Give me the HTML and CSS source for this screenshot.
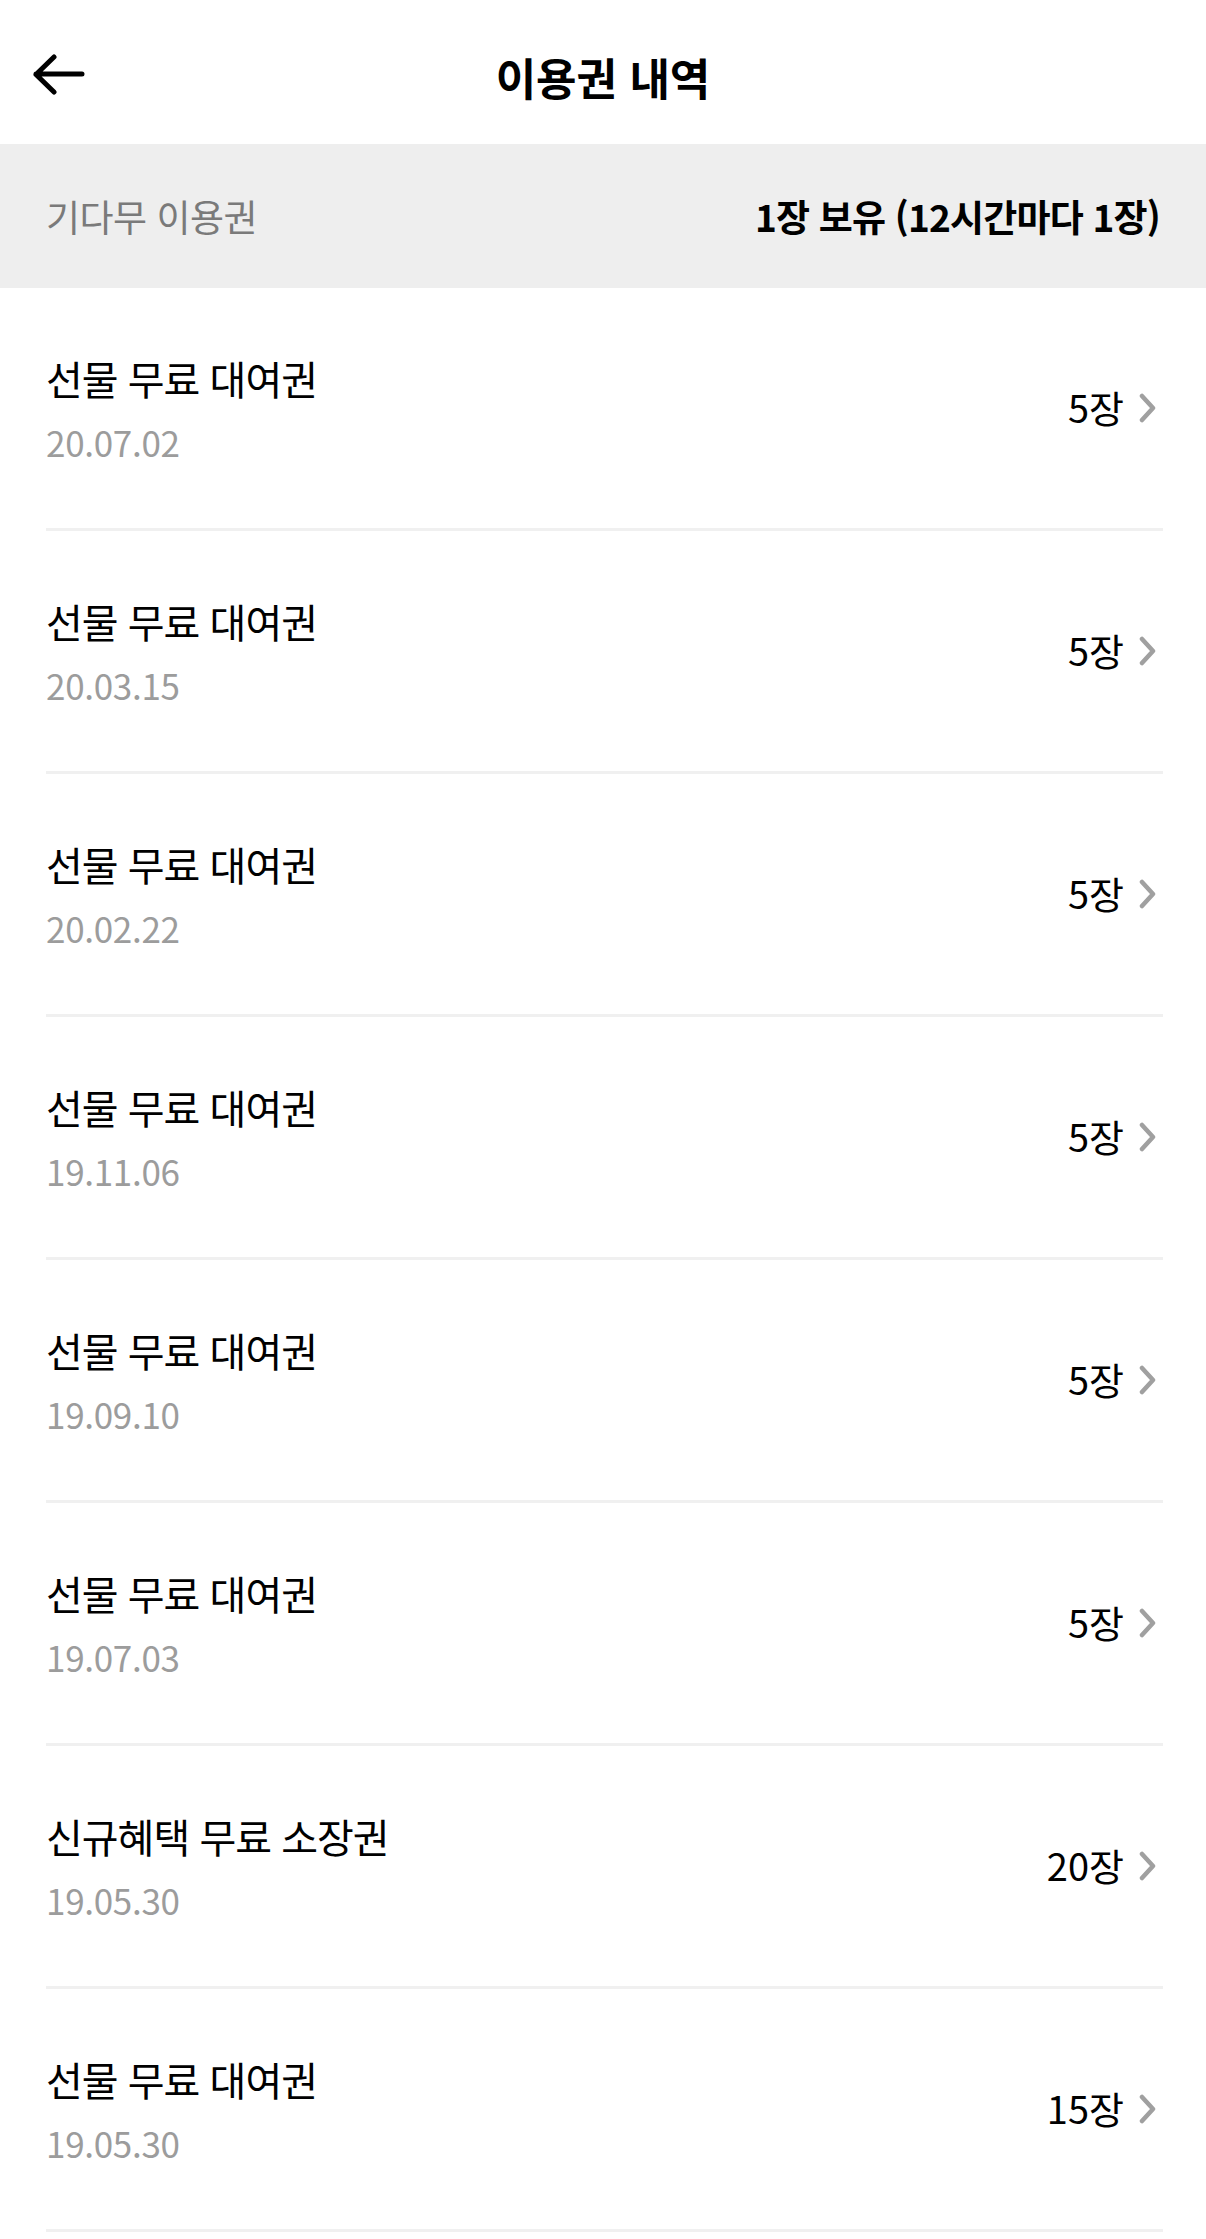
FILE: index.html
```html
<!DOCTYPE html>
<html lang="ko">
<head>
  <meta charset="UTF-8" />
  <meta name="viewport" content="width=device-width, initial-scale=1" />
  <title>이용권 내역</title>
  <link rel="stylesheet" href="styles.css">
</head>
<body>
  <header class="topbar">
    <button class="back-btn" aria-label="뒤로">
      <svg width="56" height="42" viewBox="0 0 56 42">
        <path d="M52 20H6M24 3L6 20.5 24 38" fill="none" stroke="#000" stroke-width="5" stroke-linecap="round" stroke-linejoin="round"/>
      </svg>
    </button>
    <h1 class="title">이용권 내역</h1>
  </header>

  <div class="summary">
    <span class="summary-label">기다무 이용권</span>
    <span class="summary-value">1장 보유 (12시간마다 1장)</span>
  </div>

  <ul class="ticket-list">
    <li class="ticket">
      <div class="ticket-info">
        <div class="ticket-name">선물 무료 대여권</div>
        <div class="ticket-date">20.07.02</div>
      </div>
      <div class="ticket-count">5장 <svg class="chevron" width="18" height="30" viewBox="0 0 18 30"><path d="M3 3l11 12-11 12" /></svg></div>
    </li>
    <li class="ticket">
      <div class="ticket-info">
        <div class="ticket-name">선물 무료 대여권</div>
        <div class="ticket-date">20.03.15</div>
      </div>
      <div class="ticket-count">5장 <svg class="chevron" width="18" height="30" viewBox="0 0 18 30"><path d="M3 3l11 12-11 12" /></svg></div>
    </li>
    <li class="ticket">
      <div class="ticket-info">
        <div class="ticket-name">선물 무료 대여권</div>
        <div class="ticket-date">20.02.22</div>
      </div>
      <div class="ticket-count">5장 <svg class="chevron" width="18" height="30" viewBox="0 0 18 30"><path d="M3 3l11 12-11 12" /></svg></div>
    </li>
    <li class="ticket">
      <div class="ticket-info">
        <div class="ticket-name">선물 무료 대여권</div>
        <div class="ticket-date">19.11.06</div>
      </div>
      <div class="ticket-count">5장 <svg class="chevron" width="18" height="30" viewBox="0 0 18 30"><path d="M3 3l11 12-11 12" /></svg></div>
    </li>
    <li class="ticket">
      <div class="ticket-info">
        <div class="ticket-name">선물 무료 대여권</div>
        <div class="ticket-date">19.09.10</div>
      </div>
      <div class="ticket-count">5장 <svg class="chevron" width="18" height="30" viewBox="0 0 18 30"><path d="M3 3l11 12-11 12" /></svg></div>
    </li>
    <li class="ticket">
      <div class="ticket-info">
        <div class="ticket-name">선물 무료 대여권</div>
        <div class="ticket-date">19.07.03</div>
      </div>
      <div class="ticket-count">5장 <svg class="chevron" width="18" height="30" viewBox="0 0 18 30"><path d="M3 3l11 12-11 12" /></svg></div>
    </li>
    <li class="ticket">
      <div class="ticket-info">
        <div class="ticket-name">신규혜택 무료 소장권</div>
        <div class="ticket-date">19.05.30</div>
      </div>
      <div class="ticket-count">20장 <svg class="chevron" width="18" height="30" viewBox="0 0 18 30"><path d="M3 3l11 12-11 12" /></svg></div>
    </li>
    <li class="ticket">
      <div class="ticket-info">
        <div class="ticket-name">선물 무료 대여권</div>
        <div class="ticket-date">19.05.30</div>
      </div>
      <div class="ticket-count">15장 <svg class="chevron" width="18" height="30" viewBox="0 0 18 30"><path d="M3 3l11 12-11 12" /></svg></div>
    </li>
  </ul>
</body>
</html>
```

FILE: styles.css
```css
body {
  font-family: "Noto Sans CJK KR", "Noto Sans", sans-serif;
  background: #fff;
  color: #000;
  margin: 0; padding: 0;
}
.topbar {
  height: 144px;
  display: flex;
  align-items: center;
  justify-content: center;
  position: relative;
}
.back-btn {
  position: absolute;
  left: 30px;
  top: 54px;
  background: none;
  border: none;
  padding: 0;
  cursor: pointer;
}
.back-btn svg {
  display: block;
}
.title {
  margin: 0;
  font-size: 44px;
  font-weight: bold;
  letter-spacing: 0;
  transform: translateY(5px);
}
.summary {
  height: 144px;
  background: #eeeeee;
  display: flex;
  align-items: center;
  justify-content: space-between;
  padding: 0 46px;
}
.summary-label {
  font-size: 37px;
  color: #7a7a7a;
  letter-spacing: -0.5px;
}
.summary-value {
  font-size: 37px;
  font-weight: bold;
  letter-spacing: -0.8px;
}
.ticket-list {
  list-style: none;
  margin: 0;
  padding: 0 43px 0 46px;
}
.ticket {
  height: 243px;
  box-sizing: border-box;
  border-bottom: 3px solid #f0f0f0;
  display: flex;
  align-items: center;
  justify-content: space-between;
}
.ticket-info {
  display: flex;
  flex-direction: column;
  gap: 11px;
}
.ticket-name {
  font-size: 40px;
  letter-spacing: -1px;
  line-height: 56px;
}
.ticket-date {
  font-size: 35px;
  color: #9c9c9c;
  line-height: 50px;
  letter-spacing: -0.3px;
}
.ticket-count {
  font-size: 38px;
  display: flex;
  align-items: center;
  gap: 15px;
  margin-top: -3px;
}
.chevron {
  display: block;
  fill: none;
  stroke: #a0a0a0;
  stroke-width: 4.5;
  stroke-linecap: round;
  stroke-linejoin: round;
  margin-right: 6px;
  margin-top: 3px;
}
```
